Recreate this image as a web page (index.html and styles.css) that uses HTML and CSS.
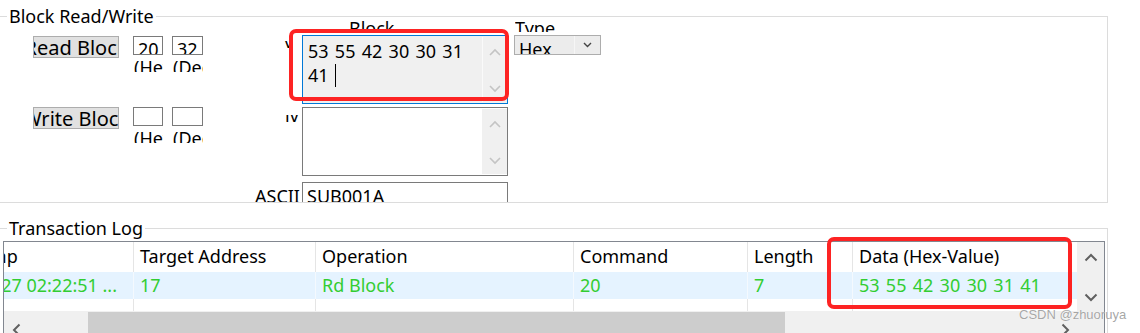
FILE: index.html
```html
<!DOCTYPE html>
<html>
<head>
<meta charset="utf-8">
<link rel="stylesheet" href="styles.css">
</head>
<body>
<div class="group g1">
  <div class="legend">Block Read/Write</div>
  <div class="g1-body">
    <div class="ops">
      <div class="op-row">
        <div class="btn"><span>Read Block</span></div>
        <div class="field f-hex"><div class="tb">20</div><div class="hint">(Hex)</div></div>
        <div class="field f-dec"><div class="tb">32</div><div class="hint">(Dec)</div></div>
      </div>
      <div class="op-row">
        <div class="btn"><span>Write Block</span></div>
        <div class="field f-hex"><div class="tb"></div><div class="hint">(Hex)</div></div>
        <div class="field f-dec"><div class="tb"></div><div class="hint">(Dec)</div></div>
      </div>
    </div>
    <div class="data">
      <div class="caps"><span class="cap cap-block">Block</span></div>
      <div class="drow r1">
        <div class="lbl"><span class="frag f1"><span>v</span></span></div>
        <div class="mtb focus">
          <div class="mtb-text hex">53 55 42 30 30 31<br>41 <span class="caret"></span></div>
          <div class="vs">
            <svg width="12" height="8" viewBox="0 0 12 8"><polyline points="1,7 6,2 11,7" fill="none" stroke="#c4c4c4" stroke-width="1.6"/></svg>
            <svg width="12" height="8" viewBox="0 0 12 8"><polyline points="1,1 6,6 11,1" fill="none" stroke="#c4c4c4" stroke-width="1.6"/></svg>
          </div>
        </div>
      </div>
      <div class="drow r2">
        <div class="lbl"><span class="frag f2"><span>lv</span></span></div>
        <div class="mtb">
          <div class="mtb-text"></div>
          <div class="vs">
            <svg width="12" height="8" viewBox="0 0 12 8"><polyline points="1,7 6,2 11,7" fill="none" stroke="#c4c4c4" stroke-width="1.6"/></svg>
            <svg width="12" height="8" viewBox="0 0 12 8"><polyline points="1,1 6,6 11,1" fill="none" stroke="#c4c4c4" stroke-width="1.6"/></svg>
          </div>
        </div>
      </div>
      <div class="drow r3">
        <div class="lbl ascii">ASCII</div>
        <div class="tb wide">SUB001A</div>
      </div>
    </div>
    <div class="type">
      <span class="cap cap-type">Type</span>
      <div class="combo">
        <span class="combo-text">Hex</span>
        <span class="combo-btn"><svg width="9" height="6" viewBox="0 0 9 6"><polyline points="1,1 4.5,4.5 8,1" fill="none" stroke="#444" stroke-width="1.4"/></svg></span>
      </div>
    </div>
  </div>
</div>

<div class="group g2">
  <div class="legend">Transaction Log</div>
  <div class="listview">
    <div class="lv-main">
      <div class="lv-view">
        <div class="lv-table">
          <div class="lv-row lv-head">
            <div class="cell">Timestamp</div>
            <div class="cell">Target Address</div>
            <div class="cell">Operation</div>
            <div class="cell">Command</div>
            <div class="cell">Length</div>
            <div class="cell">Data (Hex-Value)</div>
          </div>
          <div class="lv-row lv-sel">
            <div class="cell ts">2022/07/27 02:22:51 ...</div>
            <div class="cell">17</div>
            <div class="cell">Rd Block</div>
            <div class="cell">20</div>
            <div class="cell">7</div>
            <div class="cell hex">53 55 42 30 30 31 41</div>
          </div>
          <div class="lv-row lv-fill">
            <div class="cell"></div><div class="cell"></div><div class="cell"></div>
            <div class="cell"></div><div class="cell"></div><div class="cell"></div>
          </div>
        </div>
      </div>
      <div class="vs2">
        <svg width="14" height="9" viewBox="0 0 14 9"><polyline points="1.5,7.5 7,2 12.5,7.5" fill="none" stroke="#606060" stroke-width="2"/></svg>
        <svg width="14" height="9" viewBox="0 0 14 9"><polyline points="1.5,1.5 7,7 12.5,1.5" fill="none" stroke="#606060" stroke-width="2"/></svg>
      </div>
    </div>
    <div class="hs">
      <span class="hs-left"><svg width="9" height="14" viewBox="0 0 9 14"><polyline points="7.5,1.5 2,7 7.5,12.5" fill="none" stroke="#606060" stroke-width="2"/></svg></span>
      <div class="hs-thumb"></div>
      <div class="hs-track"></div>
      <span class="hs-right"><svg width="9" height="14" viewBox="0 0 9 14"><polyline points="1.5,1.5 7,7 1.5,12.5" fill="none" stroke="#606060" stroke-width="2"/></svg></span>
      <span class="hs-corner"></span>
    </div>
  </div>
</div>

<div class="mark m1"></div>
<div class="mark m2"></div>
<div class="wm">CSDN @zhuoruya</div>
</body>
</html>
```

FILE: styles.css
```css
html, body {
  margin: 0;
  padding: 0;
}
body {
  width: 1140px;
  height: 333px;
  overflow: hidden;
  position: relative;
  background: #ffffff;
  color: #000;
  font-family: "Noto Sans", "Open Sans", sans-serif;
  font-size: 18px;
}

/* ---------- group boxes ---------- */
.group {
  position: relative;
  box-sizing: border-box;
  width: 1108px;
  border: 1px solid #dcdcdc;
  border-left: 0;
}
.legend {
  position: absolute;
  left: 7px;
  top: -12px;
  padding: 0 2px;
  line-height: 22px;
  background: #fff;
  white-space: nowrap;
}
.g1 {
  margin-top: 16px;
  height: 187px;
}
.g1-body {
  display: flex;
  align-items: flex-start;
  height: 185px;
  overflow: hidden;
}

/* ---------- left operations ---------- */
.ops {
  flex: none;
  width: 170px;
  margin-left: 33px;
  padding-top: 19px;
}
.op-row {
  display: flex;
  align-items: flex-start;
  height: 71px;
}
.btn {
  box-sizing: border-box;
  width: 86px;
  height: 22px;
  border: 1px solid #adadad;
  background: #e1e1e1;
  display: flex;
  justify-content: center;
  align-items: center;
  overflow: hidden;
  white-space: nowrap;
  font-size: 20px;
  line-height: 19px;
}
.field { flex: none; }
.f-hex { margin-left: 14px; width: 30px; }
.f-dec { margin-left: 9px; width: 31px; }
.tb {
  box-sizing: border-box;
  height: 19px;
  border: 1px solid #7a7a7a;
  padding-left: 4px;
  line-height: 25px;
  overflow: hidden;
  white-space: nowrap;
  background: #fff;
}
.hint {
  height: 17px;
  line-height: 24px;
  padding-left: 1px;
  overflow: hidden;
  white-space: nowrap;
}

/* ---------- data column ---------- */
.data {
  flex: none;
  width: 253px;
  margin-left: 52px;
}
.caps { height: 18px; }
.cap {
  display: block;
  height: 15px;
  line-height: 22px;
  overflow: hidden;
  white-space: nowrap;
}
.cap-block { margin-left: 94px; width: 60px; }
.drow {
  display: flex;
  align-items: flex-start;
}
.r1 { height: 69px; }
.r2 { height: 69px; margin-top: 3px; }
.r3 { margin-top: 6px; }
.lbl {
  flex: none;
  width: 47px;
}
.frag {
  display: block;
  height: 7px;
  overflow: hidden;
  white-space: nowrap;
}
.frag > span {
  display: block;
  margin-top: -7px;
  line-height: 14px;
}
.f1 { margin: 6px 0 0 29px; }
.f2 { margin: 8px 0 0 30px; }
.ascii {
  text-align: right;
  padding-right: 4px;
  box-sizing: border-box;
  line-height: 29px;
  white-space: nowrap;
}
.mtb {
  box-sizing: border-box;
  display: flex;
  width: 206px;
  height: 69px;
  border: 1px solid #7a7a7a;
  background: #fff;
}
.mtb.focus {
  border-color: #0078d7;
  background: #f0f0f0;
}
.mtb-text {
  flex: 1;
  padding: 3px 0 0 5px;
  line-height: 24px;
  white-space: nowrap;
  overflow: hidden;
}
.hex { word-spacing: 1.6px; }
.caret {
  display: inline-block;
  width: 1px;
  height: 23px;
  background: #000;
  vertical-align: -5px;
}
.vs {
  flex: none;
  width: 25px;
  margin: 1px 0;
  display: flex;
  flex-direction: column;
  justify-content: space-between;
  align-items: center;
  padding: 11px 0 9px;
  box-sizing: border-box;
  background: #f0f0f0;
}
.mtb.focus .vs {
  border-left: 1px solid #fafafa;
}
.tb.wide {
  width: 206px;
  height: 26px;
  line-height: 27px;
}

/* ---------- type column ---------- */
.type {
  flex: none;
  margin-left: 6px;
}
.cap-type {
  margin: 0 0 3px 1px;
  width: 60px;
}
.combo {
  box-sizing: border-box;
  display: flex;
  width: 87px;
  height: 20px;
  border: 1px solid #adadad;
  background: #ececec;
  overflow: hidden;
}
.combo-text {
  flex: 1;
  padding-left: 4px;
  line-height: 27px;
  white-space: nowrap;
}
.combo-btn {
  flex: none;
  width: 26px;
  border-left: 1px solid #f6f6f6;
  display: flex;
  justify-content: center;
  padding-top: 6px;
  box-sizing: border-box;
}

/* ---------- transaction log ---------- */
.g2 {
  margin-top: 25px;
  height: 130px;
}
.listview {
  box-sizing: border-box;
  width: 1102px;
  height: 110px;
  margin: 12px 0 0 3px;
  border: 1px solid #828790;
  background: #fff;
}
.lv-main {
  display: flex;
  height: 69px;
}
.lv-view {
  flex: 1;
  overflow: hidden;
}
.lv-table {
  margin-left: -87px;
  width: 1300px;
}
.lv-row {
  display: grid;
  grid-template-columns: 217px 182px 258px 174px 105px 300px;
}
.cell {
  box-sizing: border-box;
  padding-left: 6px;
  border-right: 1px solid #e5e5e5;
  white-space: nowrap;
  overflow: hidden;
}
.lv-head .cell {
  height: 30px;
  line-height: 28px;
}
.lv-sel {
  background: #e5f3ff;
  color: #32cd32;
}
.lv-sel .cell {
  height: 27px;
  line-height: 27px;
  border-right-color: #f4f9fe;
}
.lv-sel .ts { padding-left: 9px; }
.lv-fill .cell { height: 12px; }
.vs2 {
  flex: none;
  width: 27px;
  box-sizing: border-box;
  padding: 11px 0 9px;
  display: flex;
  flex-direction: column;
  justify-content: space-between;
  align-items: center;
  background: #f0f0f0;
}
.hs {
  display: flex;
  height: 24px;
  background: #f0f0f0;
}
.hs-left {
  flex: none;
  width: 84px;
  padding: 7px 0 0 8px;
  box-sizing: border-box;
}
.hs-thumb {
  flex: none;
  width: 697px;
  margin-top: 1px;
  background: #cdcdcd;
}
.hs-track { flex: 1; }
.hs-right {
  flex: none;
  width: 22px;
  padding: 7px 0 0 6px;
  box-sizing: border-box;
}
.hs-corner {
  flex: none;
  width: 27px;
}

/* ---------- annotations ---------- */
.mark {
  position: absolute;
  box-sizing: border-box;
  border: 4px solid #fd2323;
  border-radius: 7px;
}
.m1 { left: 289px; top: 29px; width: 220px; height: 72px; }
.m2 { left: 827px; top: 237px; width: 245px; height: 72px; }
.wm {
  position: absolute;
  left: 1019px;
  top: 307px;
  font-family: "Liberation Sans", Arial, sans-serif;
  font-size: 13px;
  line-height: 16px;
  color: rgba(150, 150, 150, 0.85);
  text-shadow: 0 0 1px #fff;
  white-space: nowrap;
}
```
